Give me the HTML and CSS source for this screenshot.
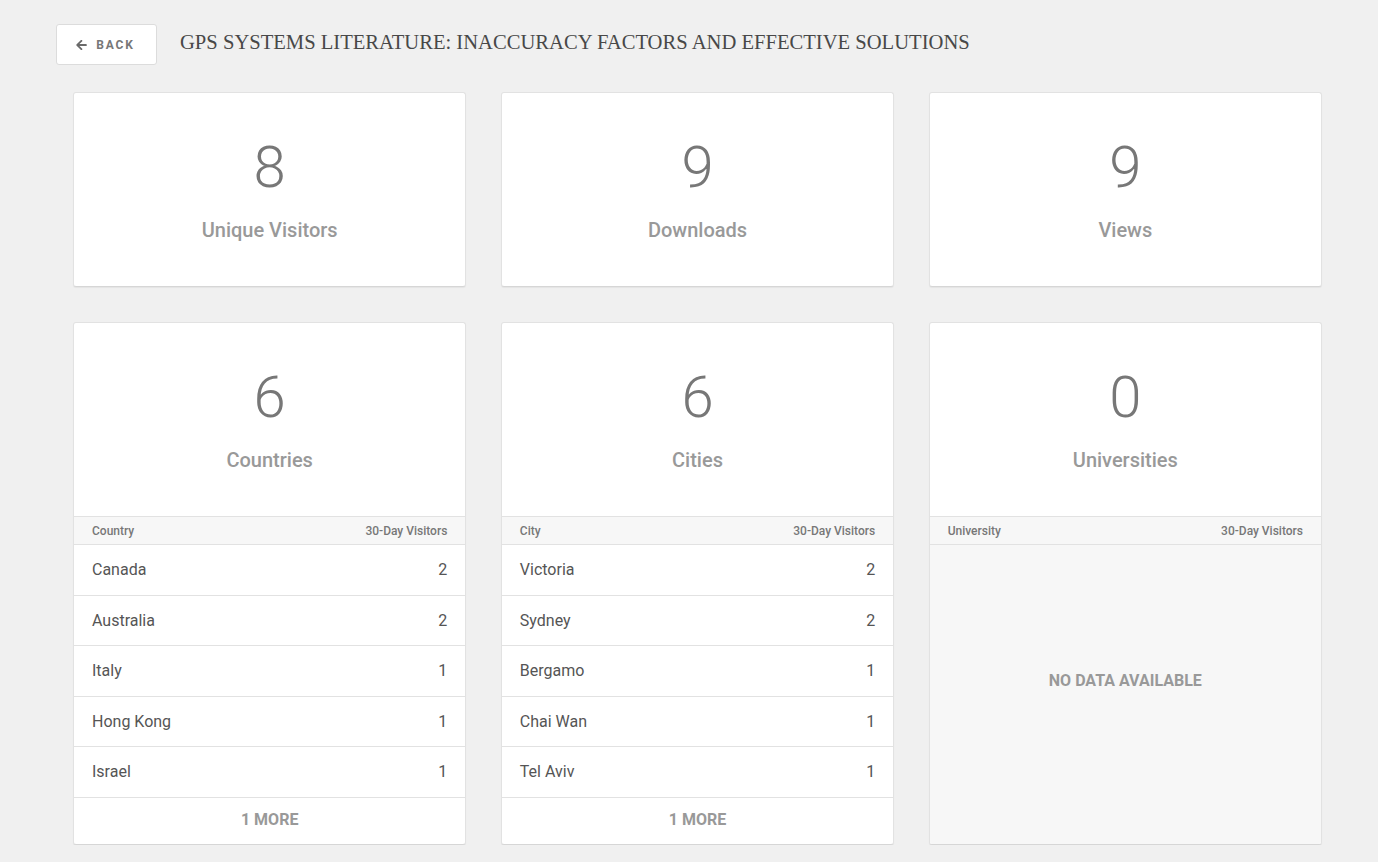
FILE: index.html
```html
<!DOCTYPE html>
<html lang="en">
<head>
<meta charset="utf-8">
<title>GPS Systems Literature - Stats</title>
<link rel="stylesheet" href="styles.css">
</head>
<body>
<div class="page">
  <header class="topbar">
    <a class="back-btn" href="#">
      <svg class="back-icon" viewBox="0 0 448 512" width="11" height="12" aria-hidden="true"><path d="M257.5 445.1l-22.2 22.2c-9.4 9.4-24.6 9.4-33.9 0L7 273c-9.4-9.4-9.4-24.6 0-33.9L201.4 44.7c9.4-9.4 24.6-9.4 33.9 0l22.2 22.2c9.5 9.5 9.3 25-.4 34.3L136.6 216H424c13.3 0 24 10.7 24 24v32c0 13.3-10.7 24-24 24H136.6l120.5 114.8c9.8 9.3 10 24.8.4 34.3z"/></svg>
      <span>BACK</span>
    </a>
    <h1 class="doc-title">GPS SYSTEMS LITERATURE: INACCURACY FACTORS AND EFFECTIVE SOLUTIONS</h1>
  </header>

  <section class="grid">
    <div class="card">
      <div class="stat">
        <div class="stat-num">8</div>
        <div class="stat-label">Unique Visitors</div>
      </div>
    </div>
    <div class="card">
      <div class="stat">
        <div class="stat-num">9</div>
        <div class="stat-label">Downloads</div>
      </div>
    </div>
    <div class="card">
      <div class="stat">
        <div class="stat-num">9</div>
        <div class="stat-label">Views</div>
      </div>
    </div>
  </section>

  <section class="grid grid-2">
    <div class="card">
      <div class="stat">
        <div class="stat-num">6</div>
        <div class="stat-label">Countries</div>
      </div>
      <div class="thead"><span>Country</span><span>30-Day Visitors</span></div>
      <div class="row"><span>Canada</span><span>2</span></div>
      <div class="row"><span>Australia</span><span>2</span></div>
      <div class="row"><span>Italy</span><span>1</span></div>
      <div class="row"><span>Hong Kong</span><span>1</span></div>
      <div class="row"><span>Israel</span><span>1</span></div>
      <div class="more">1 MORE</div>
    </div>
    <div class="card">
      <div class="stat">
        <div class="stat-num">6</div>
        <div class="stat-label">Cities</div>
      </div>
      <div class="thead"><span>City</span><span>30-Day Visitors</span></div>
      <div class="row"><span>Victoria</span><span>2</span></div>
      <div class="row"><span>Sydney</span><span>2</span></div>
      <div class="row"><span>Bergamo</span><span>1</span></div>
      <div class="row"><span>Chai Wan</span><span>1</span></div>
      <div class="row"><span>Tel Aviv</span><span>1</span></div>
      <div class="more">1 MORE</div>
    </div>
    <div class="card">
      <div class="stat">
        <div class="stat-num">0</div>
        <div class="stat-label">Universities</div>
      </div>
      <div class="thead"><span>University</span><span>30-Day Visitors</span></div>
      <div class="empty">NO DATA AVAILABLE</div>
    </div>
  </section>
</div>
</body>
</html>
```

FILE: styles.css
```css
* { box-sizing: border-box; }

html, body {
  margin: 0;
  padding: 0;
  background: #f0f0f0;
  font-family: Roboto, "Liberation Sans", Arial, sans-serif;
  color: #555;
}

.page {
  padding: 24px 56px 0 56px;
}

.topbar {
  display: flex;
  align-items: center;
  gap: 23px;
  height: 41px;
}

.back-btn {
  display: flex;
  align-items: center;
  justify-content: center;
  gap: 9px;
  width: 101px;
  height: 41px;
  background: #fff;
  border: 1px solid #dcdcdc;
  border-radius: 3px;
  text-decoration: none;
  color: #777;
  font-size: 12px;
  font-weight: 700;
  letter-spacing: 1.8px;
  padding-right: 2px;
}

.back-icon {
  fill: #6a6a6a;
}

.doc-title {
  margin: 0;
  font-family: "Liberation Serif", "Times New Roman", serif;
  font-weight: 400;
  font-size: 20.6px;
  color: #484848;
  position: relative;
  top: -2px;
}

.grid {
  display: grid;
  grid-template-columns: repeat(3, 1fr);
  column-gap: 34.5px;
  margin: 27px 0 0 17px;
  width: 1249px;
}

.grid-2 {
  margin-top: 35px;
  align-items: stretch;
}

.card {
  background: #fff;
  border: 1px solid #e2e2e2;
  border-bottom-color: #d6d6d6;
  border-radius: 3px;
  box-shadow: 0 1px 1px rgba(0,0,0,0.05);
  display: flex;
  flex-direction: column;
  overflow: hidden;
}

.stat {
  height: 193px;
  display: flex;
  flex-direction: column;
  align-items: center;
  padding-top: 38px;
}

.stat-num {
  font-size: 58px;
  font-weight: 300;
  color: #777;
  line-height: 72px;
}

.stat-label {
  font-size: 20px;
  font-weight: 500;
  color: #999;
  margin-top: 15px;
  line-height: 24px;
}

.thead {
  display: flex;
  justify-content: space-between;
  align-items: center;
  height: 29px;
  padding: 0 18px;
  background: #f7f7f7;
  border-top: 1px solid #e2e2e2;
  border-bottom: 1px solid #e2e2e2;
  font-size: 12px;
  font-weight: 500;
  color: #777;
}

.row {
  display: flex;
  justify-content: space-between;
  align-items: center;
  height: 50.5px;
  padding: 0 18px;
  border-bottom: 1px solid #e2e2e2;
  font-size: 16px;
  color: #555;
}

.more {
  height: 46px;
  display: flex;
  align-items: center;
  justify-content: center;
  padding-bottom: 2px;
  font-size: 16px;
  font-weight: 700;
  color: #999;
}

.empty {
  flex: 1;
  background: #f7f7f7;
  display: flex;
  align-items: center;
  justify-content: center;
  padding-bottom: 28px;
  font-size: 16px;
  font-weight: 700;
  color: #999;
}
```
